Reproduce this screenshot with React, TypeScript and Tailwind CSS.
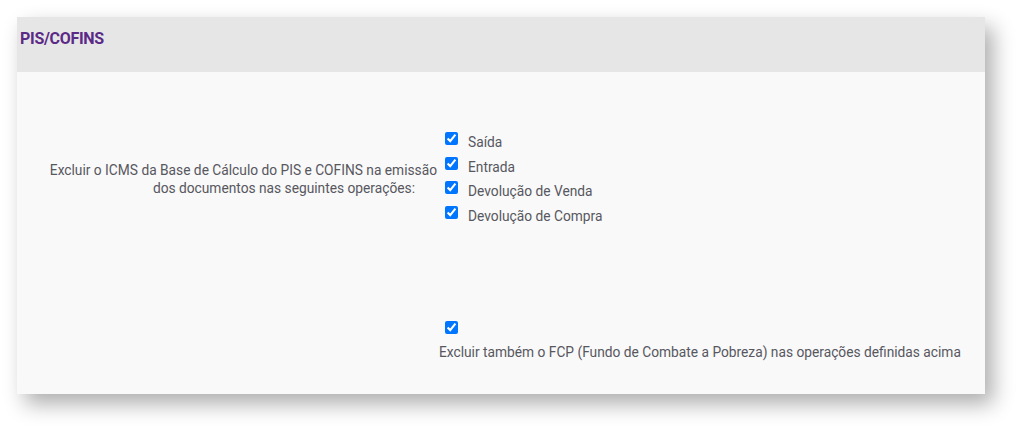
import React from "react";

const ops = ["Saída", "Entrada", "Devolução de Venda", "Devolução de Compra"];

const Check = ({ className = "" }: { className?: string }) => (
  <input type="checkbox" defaultChecked className={`m-0 h-[13px] w-[13px] accent-[#0075ff] ${className}`} />
);

export default function App() {
  return (
    <div className="min-h-screen bg-white pl-[17px] pt-[17px] font-['Roboto','Liberation_Sans',sans-serif]">
      <div className="w-[968px] bg-[#f9f9f9] shadow-[8px_10px_20px_rgba(0,0,0,0.32)]">
        <div className="h-[55px] bg-[#e6e6e6] pl-[3px] pt-[11px]">
          <h2 className="text-[16px] font-bold leading-[22px] tracking-[-0.3px] text-[#5b2a86]">PIS/COFINS</h2>
        </div>
        <div className="pb-[32px] pt-[58px] text-[13.75px] text-[#575760]">
          <div className="grid grid-cols-[420px_1fr] items-center gap-x-[8px]">
            <div className="text-right leading-[18px]">
              <div className="pl-[3px]">Excluir o ICMS da Base de Cálculo do PIS e COFINS na emissão</div>
              <div className="pr-[22px]">dos documentos nas seguintes operações:</div>
            </div>
            <div className="flex flex-col">
              {ops.map((op) => (
                <label key={op} className="flex h-[24.7px] items-center">
                  <Check className="-mt-[8px]" />
                  <span className="ml-[10px]">{op}</span>
                </label>
              ))}
            </div>
          </div>
          <div className="ml-[422px] mt-[92px] flex flex-col items-start">
            <Check className="ml-[6px]" />
            <span className="mt-[8px]">Excluir também o FCP (Fundo de Combate a Pobreza) nas operações definidas acima</span>
          </div>
        </div>
      </div>
    </div>
  );
}
